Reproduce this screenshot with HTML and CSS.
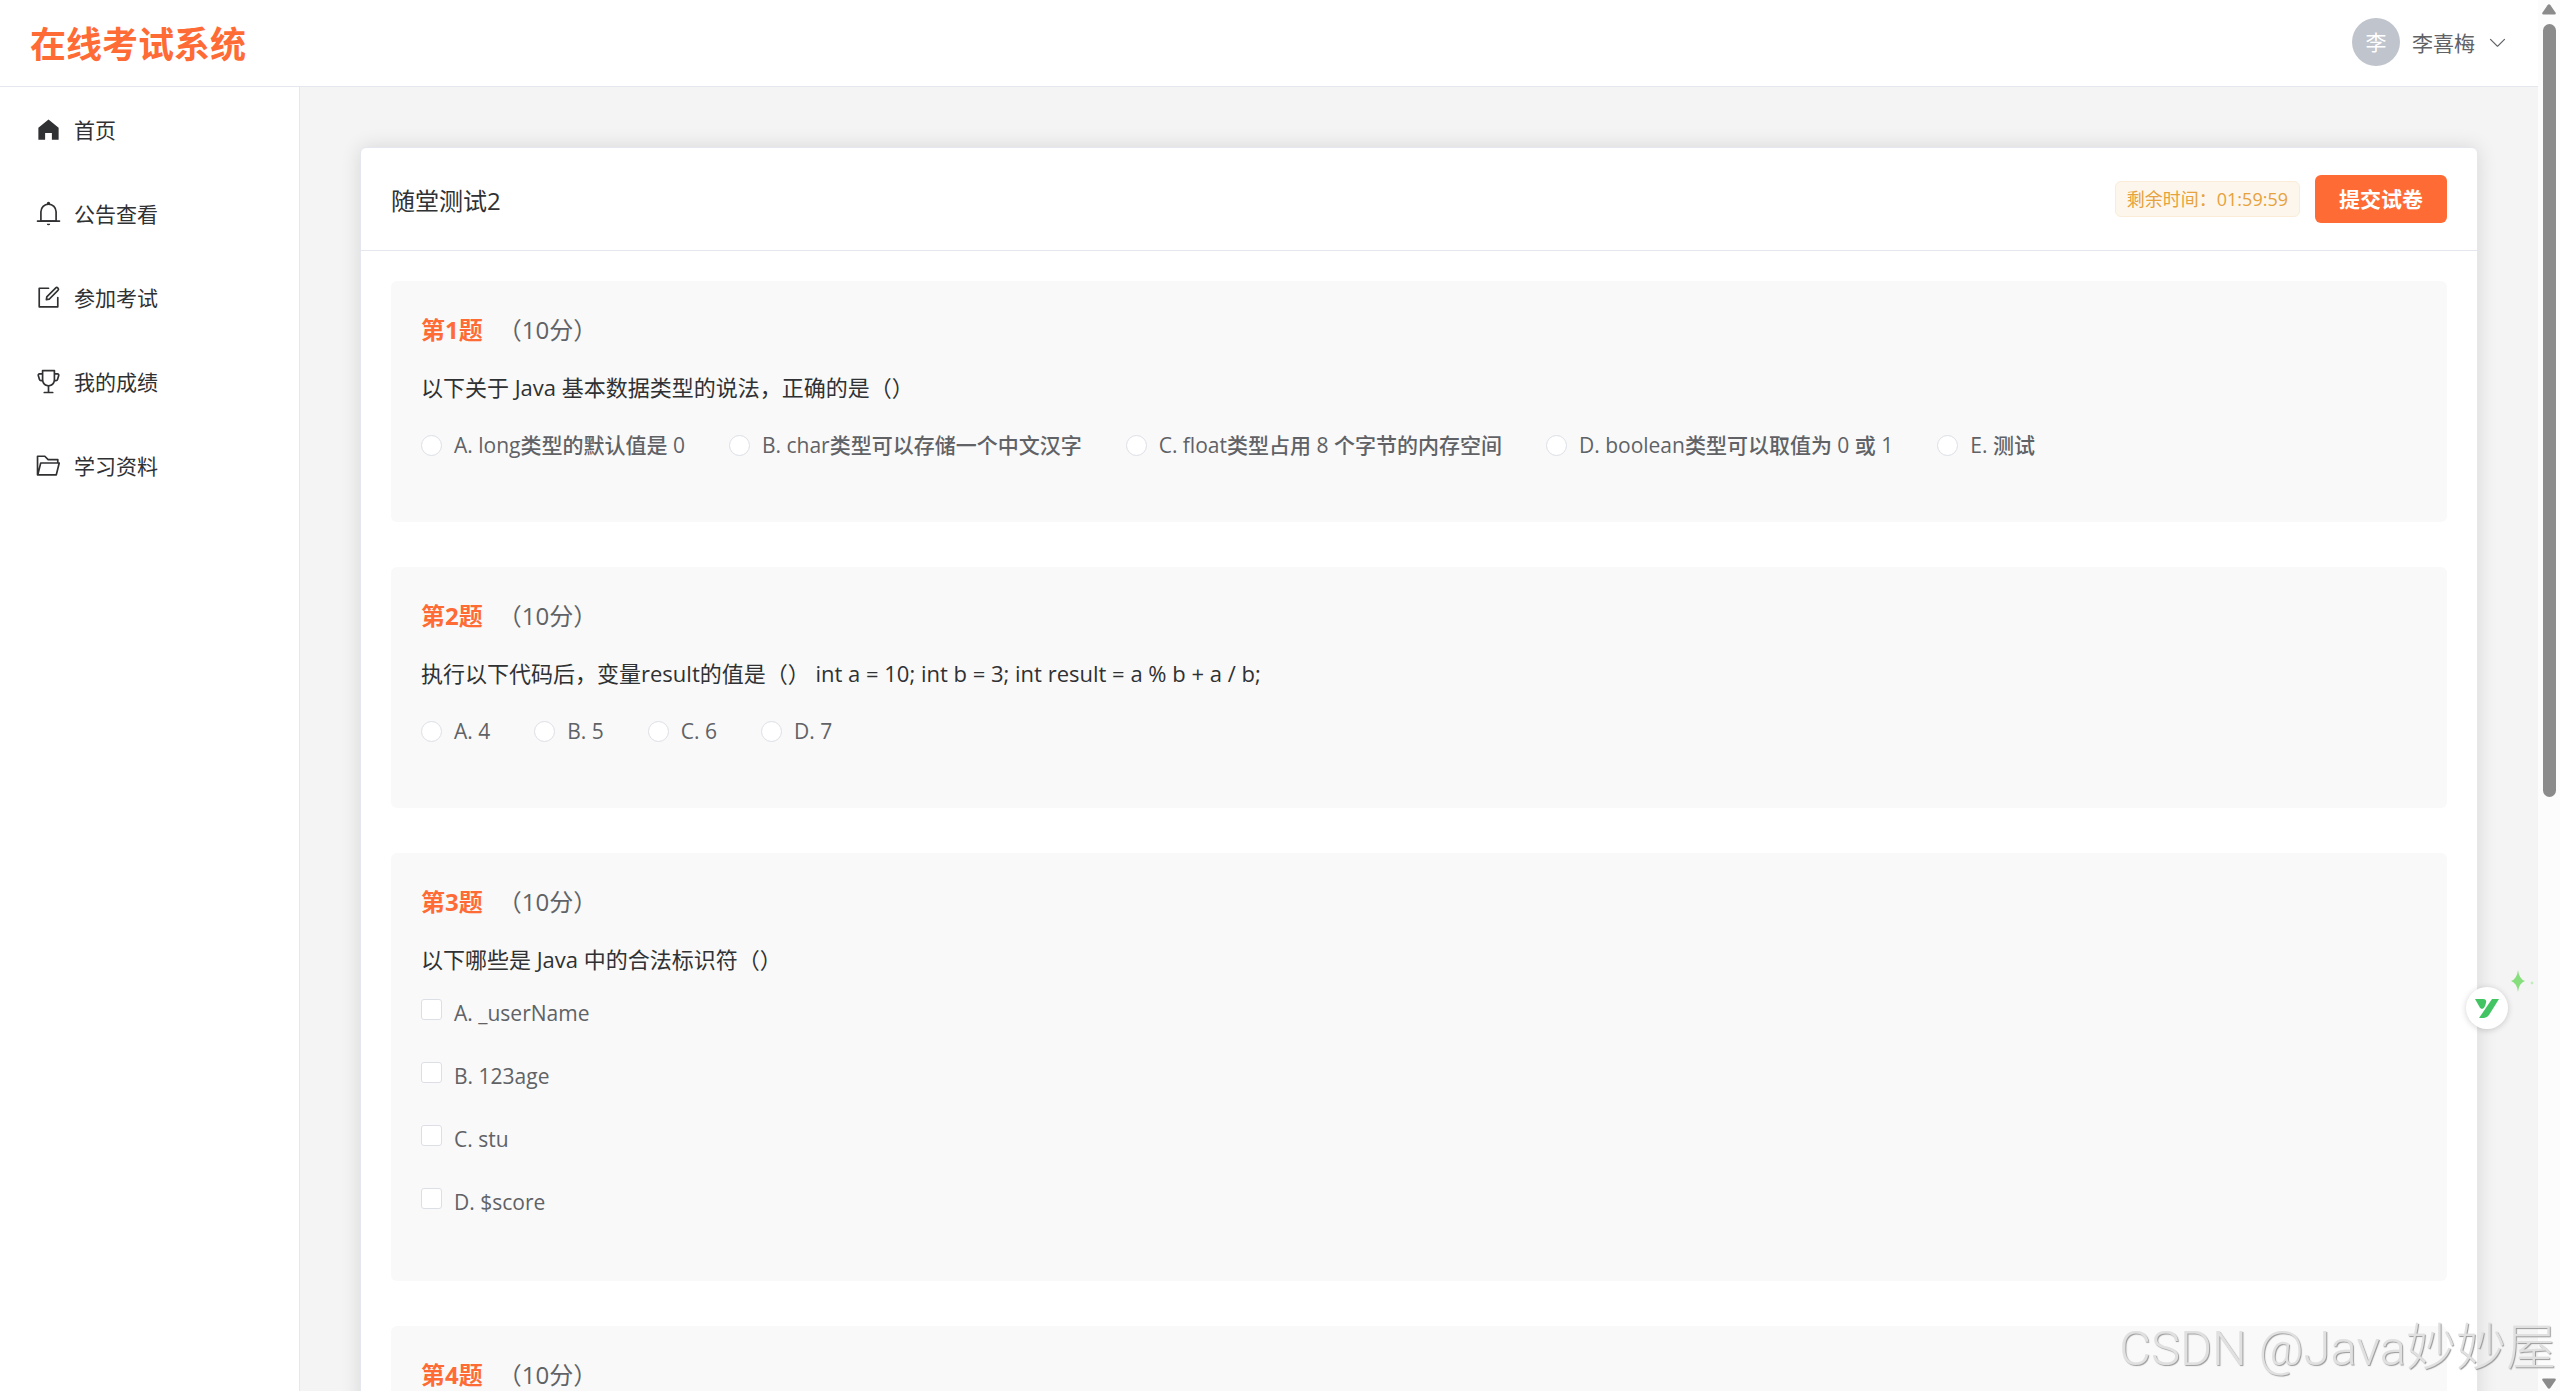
FILE: index.html
```html
<!DOCTYPE html>
<html lang="zh-CN">
<head>
	<meta charset="utf-8">
	<title>在线考试系统</title>
	<link rel="stylesheet" href="styles.css">
</head>
<body>

<div class="app">
	<div class="page">
		<header class="header">
			<h1 class="logo">在线考试系统</h1>
			<button type="button" class="user">
				<span class="avatar">李</span>
				<span>李喜梅</span>
				<svg class="arrow" viewBox="0 0 1024 1024"><path d="M831.872 340.864 512 652.672 192.128 340.864a30.592 30.592 0 0 0-42.752 0 29.12 29.12 0 0 0 0 41.6L489.664 714.24a32 32 0 0 0 44.672 0l340.288-331.712a29.12 29.12 0 0 0 0-41.728 30.592 30.592 0 0 0-42.752 0z"/></svg>
			</button>
		</header>

		<div class="body">
			<nav class="menu">
				<a href="#" class="menu-item">
					<svg viewBox="0 0 1024 1024"><path d="M512 128 128 447.936V896h255.936V640H640v256h255.936V447.936z"/></svg>
					<span>首页</span>
				</a>
				<a href="#" class="menu-item">
					<svg viewBox="0 0 1024 1024"><path d="M512 64a64 64 0 0 1 64 64v64H448v-64a64 64 0 0 1 64-64"/><path d="M256 768h512V448a256 256 0 1 0-512 0zm256-640a320 320 0 0 1 320 320v384H192V448a320 320 0 0 1 320-320"/><path d="M96 768h832q32 0 32 32t-32 32H96q-32 0-32-32t32-32m352 128h128a64 64 0 0 1-128 0"/></svg>
					<span>公告查看</span>
				</a>
				<a href="#" class="menu-item">
					<svg viewBox="0 0 1024 1024"><path d="M832 512a32 32 0 1 1 64 0v352a32 32 0 0 1-32 32H160a32 32 0 0 1-32-32V160a32 32 0 0 1 32-32h352a32 32 0 0 1 0 64H192v640h640z"/><path d="m469.952 554.24 52.8-7.552L847.104 222.4a32 32 0 1 0-45.248-45.248L477.44 501.44l-7.552 52.8zm422.4-422.4a96 96 0 0 1 0 135.808l-331.84 331.84a32 32 0 0 1-18.112 9.088L436.8 623.68a32 32 0 0 1-36.224-36.224l15.104-105.6a32 32 0 0 1 9.024-18.112l331.904-331.84a96 96 0 0 1 135.744 0z"/></svg>
					<span>参加考试</span>
				</a>
				<a href="#" class="menu-item">
					<svg viewBox="0 0 1024 1024"><path d="M480 896V702.08A256.256 256.256 0 0 1 264.064 512h-32.64a96 96 0 0 1-91.968-68.416L93.632 290.88a76.8 76.8 0 0 1 73.6-98.88H256V96a32 32 0 0 1 32-32h448a32 32 0 0 1 32 32v96h88.768a76.8 76.8 0 0 1 73.6 98.88L884.48 443.52A96 96 0 0 1 792.576 512h-32.64A256.256 256.256 0 0 1 544 702.08V896h128a32 32 0 1 1 0 64H352a32 32 0 1 1 0-64zm224-448V128H320v320a192 192 0 1 0 384 0m64 0h24.576a32 32 0 0 0 30.656-22.784l45.824-152.768A12.8 12.8 0 0 0 856.768 256H768zm-512 0V256h-88.768a12.8 12.8 0 0 0-12.288 16.448l45.824 152.768A32 32 0 0 0 231.424 448z"/></svg>
					<span>我的成绩</span>
				</a>
				<a href="#" class="menu-item">
					<svg viewBox="0 0 1024 1024"><path d="M878.08 448H241.92l-96 384h636.16zM832 384v-64H485.76L357.504 192H128v448l57.92-231.744A32 32 0 0 1 216.96 384zm-24.96 512H96a32 32 0 0 1-32-32V160a32 32 0 0 1 32-32h287.872l128.384 128H864a32 32 0 0 1 32 32v96h23.04a32 32 0 0 1 31.04 39.744l-112 448A32 32 0 0 1 807.04 896"/></svg>
					<span>学习资料</span>
				</a>
			</nav>

			<main class="main">
				<form class="card">
					<div class="card-header">
						<h2 class="card-title">随堂测试2</h2>
						<span class="tag">剩余时间：01:59:59</span>
						<button type="button" class="btn">提交试卷</button>
					</div>
					<div class="card-body">
						<section class="question">
							<h3 class="question-head"><b>第1题</b><span>（10分）</span></h3>
							<p class="question-text">以下关于 Java 基本数据类型的说法，正确的是（）</p>
							<div class="radios">
								<label><input type="radio" name="q1">A. long类型的默认值是 0</label>
								<label><input type="radio" name="q1">B. char类型可以存储一个中文汉字</label>
								<label><input type="radio" name="q1">C. float类型占用 8 个字节的内存空间</label>
								<label><input type="radio" name="q1">D. boolean类型可以取值为 0 或 1</label>
								<label><input type="radio" name="q1">E. 测试</label>
							</div>
						</section>

						<section class="question">
							<h3 class="question-head"><b>第2题</b><span>（10分）</span></h3>
							<p class="question-text">执行以下代码后，变量result的值是（） int a = 10; int b = 3; int result = a % b + a / b;</p>
							<div class="radios">
								<label><input type="radio" name="q2">A. 4</label>
								<label><input type="radio" name="q2">B. 5</label>
								<label><input type="radio" name="q2">C. 6</label>
								<label><input type="radio" name="q2">D. 7</label>
							</div>
						</section>

						<section class="question">
							<h3 class="question-head"><b>第3题</b><span>（10分）</span></h3>
							<p class="question-text">以下哪些是 Java 中的合法标识符（）</p>
							<div class="checks">
								<label><input type="checkbox" name="q3">A. _userName</label>
								<label><input type="checkbox" name="q3">B. 123age</label>
								<label><input type="checkbox" name="q3">C. stu</label>
								<label><input type="checkbox" name="q3">D. $score</label>
							</div>
						</section>

						<section class="question">
							<h3 class="question-head"><b>第4题</b><span>（10分）</span></h3>
						</section>
					</div>
				</form>
			</main>
		</div>
	</div>

	<!-- scrollbar -->
	<div class="scroll">
		<svg viewBox="0 0 14 11"><path d="M5.500 1.200q1.500-2 3 0l5 7.300q1 2-1 2h-11q-2 0-1-2z"/></svg>
		<div class="scroll-track"><div class="scroll-thumb"></div></div>
		<svg viewBox="0 0 14 11"><path d="M5.500 9.800q1.500 2 3 0l5-7.300q1-2-1-2h-11q-2 0-1 2z"/></svg>
	</div>
</div>

<!-- floating helper -->
<button type="button" class="helper" aria-label="助手">
	<svg viewBox="0 0 24 19"><path d="M0 0h8q4 0 3 4l-1 3q-1 3-3 3-2 0-3-3z"/><path d="M17 0h7L14 16q-2 3-5 3H4z"/></svg>
</button>
<svg class="sparkle" viewBox="0 0 24 22"><path d="M8 0q1 9 7 11-6 2-7 11-1-9-7-11 6-2 7-11z" fill="#86df7c"/><path d="M22 11q0 2 2 2-2 0-2 2 0-2-2-2 2 0 2-2z" fill="#a9e8a4"/></svg>

<div class="watermark">CSDN @Java<span>妙妙屋</span></div>

</body>
</html>
```
FILE: styles.css
```css
* {
	box-sizing: border-box;
}
body {
	margin: 0;
	color: #303133;
	font-family: "Open Sans", "Noto Sans CJK SC", sans-serif;
	font-size: 21px;
	background: #f4f4f4;
}
h1, h2, h3, p {
	margin: 0;
	font-weight: 400;
}
button {
	font-family: inherit;
	font-size: inherit;
	border: none;
	cursor: pointer;
}
.app {
	display: flex;
	height: 100vh;
	overflow: hidden;
}
.page {
	display: flex;
	flex: 1;
	flex-direction: column;
	min-width: 0;
}

/* header */
.header {
	display: flex;
	flex: none;
	align-items: center;
	justify-content: space-between;
	height: 87px;
	padding: 0 30px 2px;
	background: #fff;
	border-bottom: 1px solid #e4e7ed;
}
.logo {
	color: #ff6b35;
	font-size: 36px;
	font-weight: 700;
}
.user {
	display: flex;
	align-items: center;
	gap: 12px;
	padding: 0;
	color: #606266;
	background: none;
}
.avatar {
	width: 48px;
	color: #fff;
	line-height: 48px;
	text-align: center;
	background: #c0c4cc;
	border-radius: 50%;
}
.arrow {
	width: 21px;
	height: 21px;
	fill: #606266;
}

/* sidebar */
.body {
	display: flex;
	flex: 1;
	min-height: 0;
}
.menu {
	flex: none;
	width: 300px;
	background: #fff;
	border-right: 1px solid #e4e7ed;
}
.menu-item {
	display: flex;
	align-items: center;
	gap: 12px;
	height: 84px;
	padding: 0 35px;
	color: #303133;
	text-decoration: none;
}
.menu-item svg {
	width: 27px;
	height: 27px;
	fill: #303133;
}

/* exam */
.main {
	flex: 1;
	min-width: 0;
	padding: 60px;
	overflow: hidden;
}
.card {
	background: #fff;
	border: 1px solid #e4e7ed;
	border-radius: 6px;
	box-shadow: 0 0 20px rgba(0, 0, 0, .12);
}
.card-header {
	display: flex;
	align-items: center;
	gap: 15px;
	padding: 27px 30px;
	border-bottom: 1px solid #e4e7ed;
}
.card-title {
	flex: 1;
	padding-top: 3px;
	font-size: 24px;
	line-height: 36px;
}
.tag {
	padding: 0 11px;
	color: #e6a23c;
	font-size: 18px;
	line-height: 34px;
	background: #fdf6ec;
	border: 1px solid #faecd8;
	border-radius: 6px;
}
.btn {
	height: 48px;
	padding: 0 24px 2px;
	color: #fff;
	font-weight: 700;
	background: #ff6b35;
	border-radius: 6px;
}
.card-body {
	display: grid;
	gap: 45px;
	padding: 30px;
}
.question {
	padding: 30px;
	background: #f9f9f9;
	border-radius: 6px;
}
.question-head {
	display: flex;
	gap: 15px;
	color: #606266;
	font-size: 24px;
	line-height: 38px;
}
.question-head b {
	color: #ff6b35;
}
.question-text {
	margin-top: 20px;
	font-size: 22px;
	line-height: 36px;
}
.radios,
.checks {
	display: flex;
	color: #606266;
	font-weight: 500;
}
.radios {
	gap: 44px;
	margin: 16px 0 23px;
	line-height: 48px;
}
.checks {
	flex-direction: column;
	gap: 27px;
	margin: 18px 0 31px;
	line-height: 36px;
}
.radios label,
.checks label {
	display: flex;
	gap: 12px;
}
.radios label {
	align-items: center;
}
.radios input,
.checks input {
	width: 21px;
	height: 21px;
	margin: 0;
	background: #fff;
	border: 1px solid #dcdfe6;
	appearance: none;
}
.radios input {
	border-radius: 50%;
}
.checks input {
	margin-top: 4px;
	border-radius: 3px;
}

/* scrollbar */
.scroll {
	display: flex;
	flex: none;
	flex-direction: column;
	align-items: center;
	gap: 9px;
	width: 22px;
	padding: 4px 0 2px;
	background: #fcfcfc;
}
.scroll svg {
	width: 14px;
	height: 11px;
	fill: #8b8b8b;
}
.scroll-track {
	flex: 1;
}
.scroll-thumb {
	width: 13px;
	height: 57.5%;
	background: #8b8b8b;
	border-radius: 7px;
}

.helper {
	position: fixed;
	right: 52px;
	bottom: 362px;
	display: flex;
	align-items: center;
	justify-content: center;
	width: 42px;
	height: 42px;
	padding: 0;
	background: #fff;
	border-radius: 50%;
	box-shadow: 0 1px 6px rgba(0, 0, 0, .18);
}
.helper svg {
	width: 24px;
	height: 19px;
	fill: #43c463;
}
.sparkle {
	position: fixed;
	right: 26px;
	bottom: 399px;
	width: 24px;
	height: 22px;
}
.watermark {
	position: fixed;
	right: 4px;
	bottom: 12px;
	color: #e0e0e0;
	font-family: Roboto, "Noto Sans CJK SC", sans-serif;
	font-size: 49px;
	font-weight: 300;
	line-height: 60px;
	text-shadow: 1px 1px 1px #999;
	pointer-events: none;
}
.watermark span {
	font-size: 50px;
}
```
